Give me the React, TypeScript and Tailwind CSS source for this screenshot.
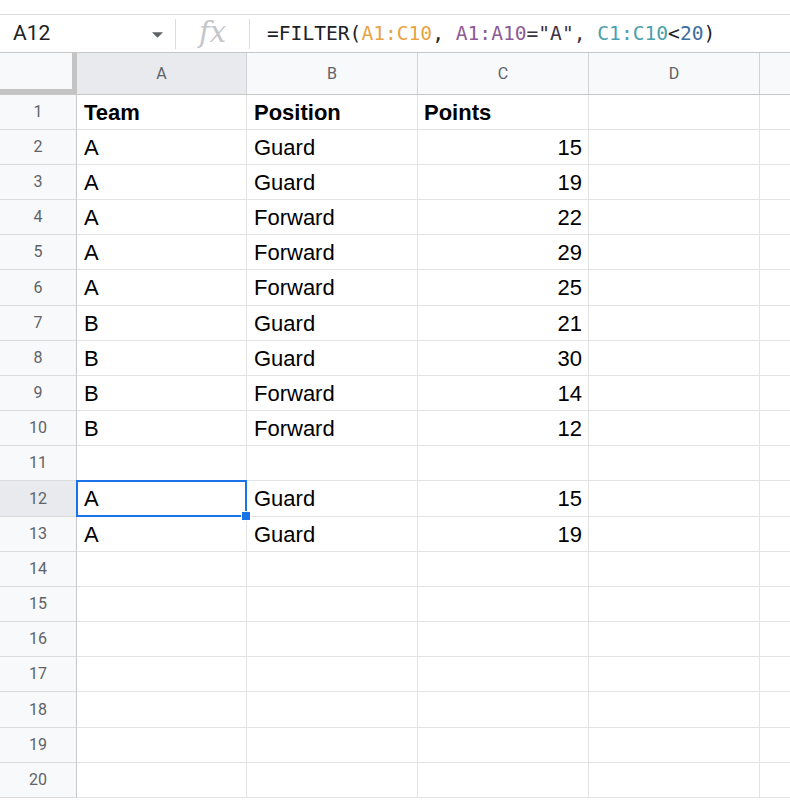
import React from 'react';

const rows: [string, string, string][] = [
  ['Team', 'Position', 'Points'],
  ['A', 'Guard', '15'],
  ['A', 'Guard', '19'],
  ['A', 'Forward', '22'],
  ['A', 'Forward', '29'],
  ['A', 'Forward', '25'],
  ['B', 'Guard', '21'],
  ['B', 'Guard', '30'],
  ['B', 'Forward', '14'],
  ['B', 'Forward', '12'],
  ['', '', ''],
  ['A', 'Guard', '15'],
  ['A', 'Guard', '19'],
];

const FormulaBar = () => (
  <div className="flex items-center h-[39px] border-t border-[#dadce0] border-b border-b-[#c7c7c7] bg-white">
    <div className="w-[175px] h-full flex items-center justify-between pl-[13px] pr-[12px] font-['Roboto',sans-serif] text-[21px] text-[#202124]">
      <span>A12</span>
      <svg width="11" height="6" viewBox="0 0 10 5" className="mt-[2px]">
        <path d="M0 0 L5 5 L10 0 Z" fill="#5f6368" />
      </svg>
    </div>
    <div className="w-px h-[30px] bg-[#dadce0]" />
    <div className="w-[73px] flex items-center justify-center font-['DejaVu_Serif',serif] italic text-[29px] text-[#c4c6c9] -mt-[2px]">
      fx
    </div>
    <div className="w-px h-[30px] bg-[#dadce0]" />
    <div className="pl-[17px] font-['DejaVu_Sans_Mono',monospace] text-[19.6px] text-[#202124] whitespace-pre">
      <span>=FILTER(</span>
      <span className="text-[#e8a443]">A1:C10</span>
      <span>, </span>
      <span className="text-[#8d5a96]">A1:A10</span>
      <span className="text-[#3c3043]">="A", </span>
      <span className="text-[#4aa1ad]">C1:C10</span>
      <span>&lt;</span>
      <span className="text-[#3b6fa3]">20</span>
      <span>)</span>
    </div>
  </div>
);

const ColHeader = () => (
  <div className="flex h-[42px] bg-[#f8f9fa] border-b border-[#c7c7c7] font-['Roboto',sans-serif] text-[16px] text-[#5f6368]">
    <div className="w-[77px] shrink-0 flex">
      <div className="flex-1 flex flex-col">
        <div className="flex-1" />
        <div className="h-[5px] bg-[#c4c4c4]" />
      </div>
      <div className="w-[5px] bg-[#c4c4c4]" />
    </div>
    <div className="w-[170px] shrink-0 flex items-center justify-center bg-[#e8eaed] border-r border-[#d0d2d4]">A</div>
    <div className="w-[171px] shrink-0 flex items-center justify-center border-r border-[#d0d2d4]">B</div>
    <div className="w-[171px] shrink-0 flex items-center justify-center border-r border-[#d0d2d4]">C</div>
    <div className="w-[171px] shrink-0 flex items-center justify-center border-r border-[#d0d2d4]">D</div>
    <div className="flex-1" />
  </div>
);

export default function App() {
  const allRows = Array.from({ length: 20 }, (_, i) => rows[i] ?? ['', '', '']);
  return (
    <div className="w-[790px] h-[800px] overflow-hidden bg-white">
      <div className="h-[14px] bg-white" />
      <FormulaBar />
      <ColHeader />
      {allRows.map((r, i) => {
        const n = i + 1;
        const selected = n === 12;
        return (
          <div
            key={n}
            className={`flex ${n % 6 === 0 ? 'h-[36px]' : 'h-[35px]'} font-['Liberation_Sans',Arial,sans-serif] text-[22px] text-black`}
          >
            <div
              className={`w-[77px] shrink-0 flex items-center justify-center font-['Roboto',sans-serif] text-[16px] text-[#5f6368] border-r border-[#c7c7c7] border-b border-b-[#dcdcdc] ${selected ? 'bg-[#e8eaed]' : 'bg-[#f8f9fa]'}`}
            >
              {n}
            </div>
            <div className={`relative w-[170px] shrink-0 flex items-center pl-[7px] border-r border-b border-[#e2e3e3] ${n === 1 ? 'font-bold' : ''}`}>
              {r[0]}
              {selected && (
                <div className="absolute z-10 -left-px -top-px -right-px -bottom-px border-2 border-[#1a73e8]">
                  <div className="absolute -right-[6px] -bottom-[6px] w-[10px] h-[10px] bg-[#1a73e8] border border-white" />
                </div>
              )}
            </div>
            <div className={`w-[171px] shrink-0 flex items-center pl-[7px] border-r border-b border-[#e2e3e3] ${n === 1 ? 'font-bold' : ''}`}>
              {r[1]}
            </div>
            <div
              className={`w-[171px] shrink-0 flex items-center px-[6px] border-r border-b border-[#e2e3e3] ${n === 1 ? 'font-bold justify-start' : 'justify-end'}`}
            >
              {r[2]}
            </div>
            <div className="w-[171px] shrink-0 border-r border-b border-[#e2e3e3]" />
            <div className="flex-1 border-b border-[#e2e3e3]" />
          </div>
        );
      })}
    </div>
  );
}
